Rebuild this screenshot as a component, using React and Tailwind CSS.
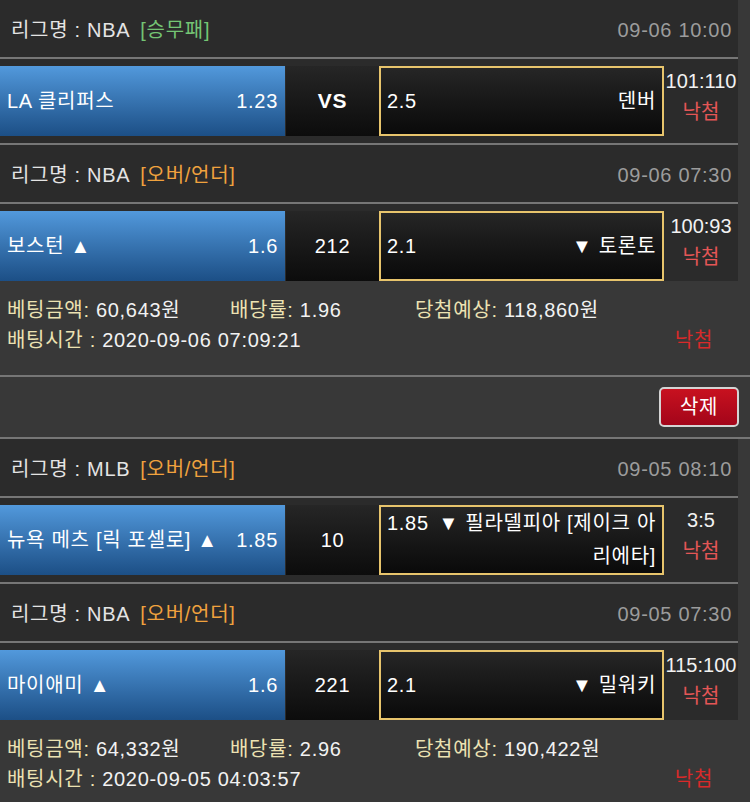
import React from 'react';

const bets = [
  {
    games: [
      { league: 'NBA', type: '승무패', win: true, time: '09-06 10:00', home: 'LA 클리퍼스', homeOdds: '1.23', mid: 'VS', awayOdds: '2.5', away: '덴버', score: '101:110' },
      { league: 'NBA', type: '오버/언더', time: '09-06 07:30', home: '보스턴 ▲', homeOdds: '1.6', mid: '212', awayOdds: '2.1', away: '▼ 토론토', score: '100:93' },
    ],
    amount: '60,643원',
    rate: '1.96',
    expect: '118,860원',
    betTime: '2020-09-06 07:09:21',
  },
  {
    games: [
      { league: 'MLB', type: '오버/언더', time: '09-05 08:10', home: '뉴욕 메츠 [릭 포셀로] ▲', homeOdds: '1.85', mid: '10', awayOdds: '1.85', away: '▼ 필라델피아 [제이크 아', away2: '리에타]', score: '3:5' },
      { league: 'NBA', type: '오버/언더', time: '09-05 07:30', home: '마이애미 ▲', homeOdds: '1.6', mid: '221', awayOdds: '2.1', away: '▼ 밀워키', score: '115:100' },
    ],
    amount: '64,332원',
    rate: '2.96',
    expect: '190,422원',
    betTime: '2020-09-05 04:03:57',
  },
];

const GameRow = ({ g }) => (
  <div className="w-[738px] bg-[#2b2b2b]">
    {/* 리그 헤더 */}
    <div className="h-[57px] flex items-center justify-between pl-[11px] pr-[6px] pt-[2px]">
      <div className="text-[#e4e4e4]">
        리그명 : {g.league}
        <span className={`ml-[10px] ${g.win ? 'text-[#74c474]' : 'text-[#f0a23e]'}`}>[{g.type}]</span>
      </div>
      <div className="text-[#9c9c9c]">{g.time}</div>
    </div>
    <div className="h-[2px] bg-[#767676]" />

    {/* 경기 */}
    <div className="flex pt-[7px]">
      <div className="w-[285px] h-[70px] flex items-center justify-between px-[7px] text-white bg-gradient-to-b from-[#5299dc] to-[#1c4f86]">
        <span className="whitespace-nowrap">{g.home}</span>
        <span>{g.homeOdds}</span>
      </div>
      <div className="w-[93px] h-[70px] ml-px flex items-center justify-center text-white bg-gradient-to-b from-[#262626] to-[#0c0c0c]">
        {g.mid === 'VS' ? <span className="font-bold text-[21px]">VS</span> : g.mid}
      </div>
      <div className="w-[285px] h-[70px] border-2 border-[#e7c46c] bg-gradient-to-b from-[#262626] to-[#0a0a0a] text-white px-[6px]">
        {g.away2 ? (
          <div className="h-full flex flex-col justify-center leading-[33px]">
            <div className="flex justify-between whitespace-nowrap">
              <span>{g.awayOdds}</span>
              <span>{g.away}</span>
            </div>
            <div className="text-right">{g.away2}</div>
          </div>
        ) : (
          <div className="h-full flex items-center justify-between">
            <span>{g.awayOdds}</span>
            <span className="whitespace-nowrap">{g.away}</span>
          </div>
        )}
      </div>
      <div className="w-[74px] h-[70px] text-center leading-[31px] tracking-normal">
        <div className="text-[#f2f2f2] whitespace-nowrap">{g.score}</div>
        <div className="text-[#e45656]">낙첨</div>
      </div>
    </div>
  </div>
);

const Bet = ({ bet }) => (
  <div>
    {bet.games.map((g, idx) => (
      <div key={idx}>
        {idx > 0 && (
          <div className="w-[738px] bg-[#2b2b2b] pt-[7px]">
            <div className="h-[2px] bg-[#767676]" />
          </div>
        )}
        <GameRow g={g} />
      </div>
    ))}

    {/* 베팅 정보 */}
    <div className="h-[94px] pt-[14px] pl-[7px] leading-[30px]">
      <div className="flex">
        <span className="w-[223px]">
          <span className="text-[#ece2b2]">베팅금액:</span> <span className="text-[#f2f2f2]">{bet.amount}</span>
        </span>
        <span className="w-[185px]">
          <span className="text-[#ece2b2]">배당률:</span> <span className="text-[#f2f2f2]">{bet.rate}</span>
        </span>
        <span>
          <span className="text-[#ece2b2]">당첨예상:</span> <span className="text-[#f2f2f2]">{bet.expect}</span>
        </span>
      </div>
      <div className="flex justify-between pr-[37px]">
        <span>
          <span className="text-[#ece2b2]">배팅시간 :</span> <span className="text-[#f2f2f2]">{bet.betTime}</span>
        </span>
        <span className="text-[#d82a2a]">낙첨</span>
      </div>
    </div>

    <div className="h-[2px] bg-[#767676]" />
    <div className="h-[60px] flex items-center justify-end pr-[11px]">
      <button className="w-[80px] h-[40px] rounded-[5px] border-2 border-[#d4d4d4] bg-gradient-to-b from-[#c8111f] to-[#a3051a] text-white">
        삭제
      </button>
    </div>
    <div className="h-[2px] bg-[#767676]" />
  </div>
);

export default function App() {
  return (
    <div className="w-[750px] h-[802px] overflow-hidden bg-[#383838] text-[20px] tracking-[0.7px] font-[family-name:'Liberation_Sans','Noto_Sans_CJK_KR',sans-serif]">
      {bets.map((bet, idx) => (
        <Bet key={idx} bet={bet} />
      ))}
    </div>
  );
}
